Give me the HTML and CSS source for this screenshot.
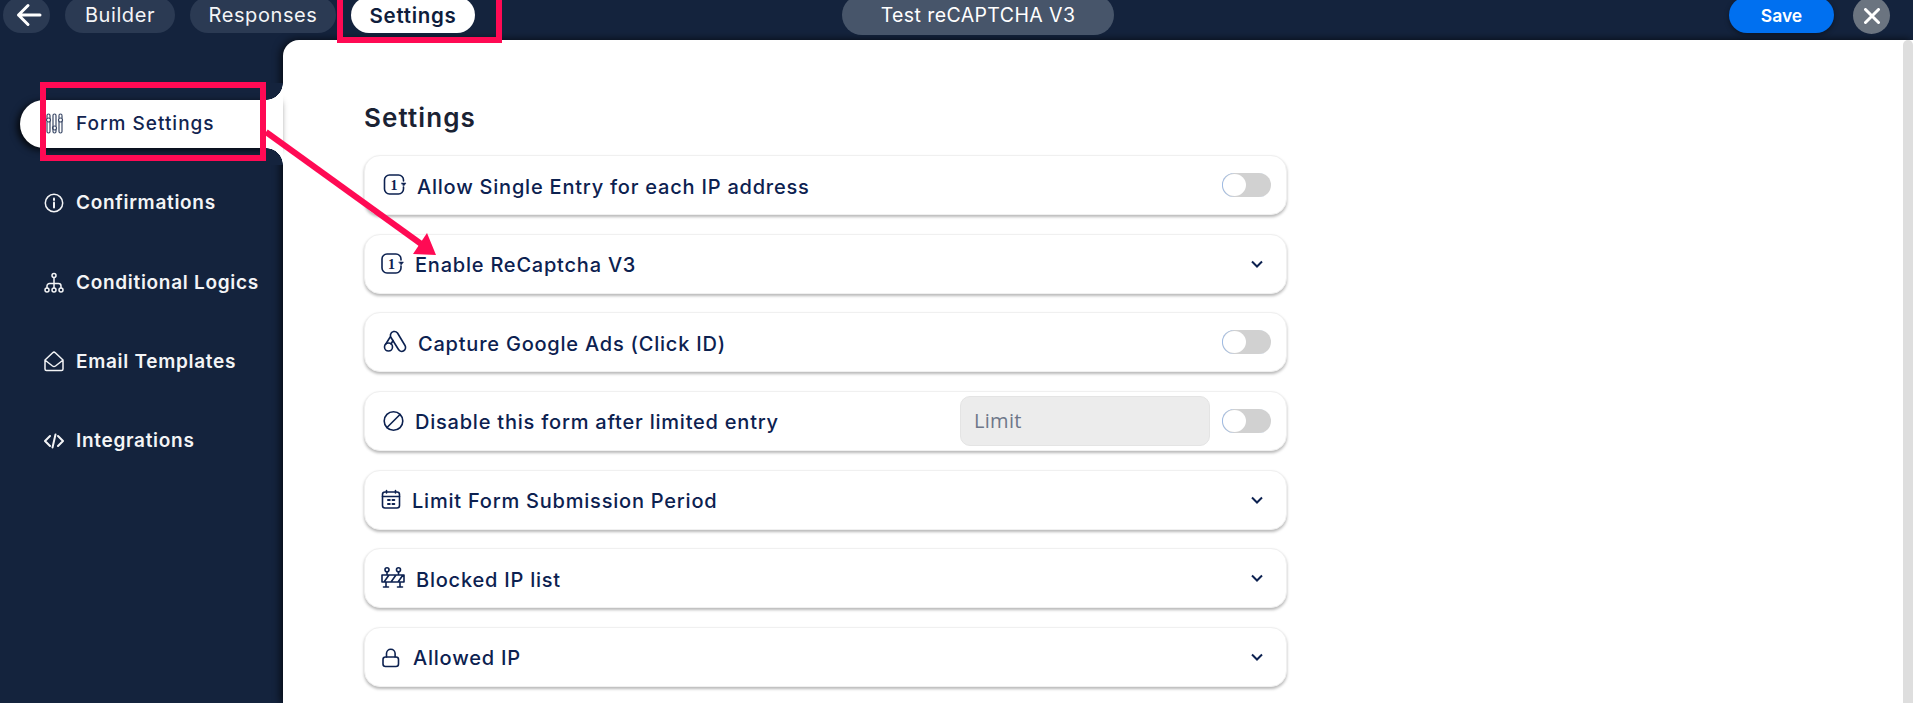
FILE: index.html
```html
<!DOCTYPE html>
<html lang="en">
<head>
  <meta charset="UTF-8">
  <meta name="viewport" content="width=device-width, initial-scale=1.0">
  <title>Test reCAPTCHA V3 - Settings</title>
  <link rel="stylesheet" href="styles.css">
</head>
<body>

  <header class="topbar">
    <div class="topbar-left">
      <button class="back">
        <svg width="26" height="24" viewBox="0 0 26 24"><path d="M24 12H2.500M12 2.500 2.500 12l9.500 9.500" class="stroke-white"/></svg>
      </button>
      <a class="tab tab-builder">Builder</a>
      <a class="tab tab-responses">Responses</a>
      <a class="tab tab-active">Settings</a>
    </div>
    <div class="form-title">Test reCAPTCHA V3</div>
    <div class="topbar-right">
      <button class="save">Save</button>
      <button class="close">
        <svg width="16" height="16" viewBox="0 0 16 16"><path d="M1.500 1.500l13 13M14.500 1.500l-13 13" class="stroke-white"/></svg>
      </button>
    </div>
  </header>

  <div class="layout">
    <nav class="sidebar">
      <a class="nav-item active">
        <svg width="20" height="22" viewBox="0 0 20 22" class="nav-ico"><path d="M3 2.500v3M3 9v9.500a1.500 1.500 0 0 0 3 0V9M6 2.500v3M9 10v8.500a1.500 1.500 0 0 0 3 0V17M12 13v-10.500M9 2.500a1.500 1.500 0 0 1 3 0M9 2.500V10M15 3v2M18 3v2M15 9v9.500a1.500 1.500 0 0 0 3 0V9M3 2.500a1.500 1.500 0 0 1 3 0M15 2.500a1.500 1.500 0 0 1 3 0"/><circle cx="4.500" cy="7" r="2"/><circle cx="10.500" cy="15" r="2"/><circle cx="16.500" cy="7" r="2"/></svg>
        <span>Form Settings</span>
      </a>
      <a class="nav-item">
        <svg width="20" height="22" viewBox="0 0 20 22" class="nav-ico"><circle cx="10" cy="11" r="8.700"/><path d="M10 10.500v5" class="thick"/><path d="M10 6.500v1.600" class="thick"/></svg>
        <span>Confirmations</span>
      </a>
      <a class="nav-item">
        <svg width="20" height="22" viewBox="0 0 20 22" class="nav-ico"><circle cx="10" cy="4.500" r="2"/><path d="M10 6.500v6M3 17v-2a2.500 2.500 0 0 1 2.500-2.500h9A2.500 2.500 0 0 1 17 15v2M10 12.500V17"/><circle cx="3" cy="19" r="2"/><circle cx="10" cy="19" r="2"/><circle cx="17" cy="19" r="2"/></svg>
        <span>Conditional Logics</span>
      </a>
      <a class="nav-item">
        <svg width="20" height="22" viewBox="0 0 20 22" class="nav-ico"><path d="M1 10l7.700-7.300a2 2 0 0 1 2.600 0L19 10v9a1.500 1.500 0 0 1-1.500 1.500h-15A1.500 1.500 0 0 1 1 19zM1.500 10.500l7 5.500a2.500 2.500 0 0 0 3 0l7-5.500"/></svg>
        <span>Email Templates</span>
      </a>
      <a class="nav-item">
        <svg width="20" height="22" viewBox="0 0 20 22" class="nav-ico"><path d="M6 6l-5 5 5 5M14 6l5 5-5 5M11.500 4.500l-3 13" class="thick"/></svg>
        <span>Integrations</span>
      </a>
    </nav>

    <main class="panel">
      <div class="content">
        <h1>Settings</h1>
        <div class="rows">

          <div class="row">
            <svg width="36" height="24" viewBox="0 0 36 24" class="row-ico"><path d="M22.500 8V7a5 5 0 0 0-5-5h-9a5 5 0 0 0-5 5v9a5 5 0 0 0 5 5h9a5 5 0 0 0 5-5v-2"/><path d="M20.500 10h4.500l-2.250 3z" class="fill"/><text x="9.500" y="16.500" class="one">1</text></svg>
            <span class="label">Allow Single Entry for each IP address</span>
            <label class="toggle"><i></i></label>
          </div>

          <div class="row">
            <svg width="34" height="24" viewBox="0 0 34 24" class="row-ico"><path d="M20 8V7a5 5 0 0 0-5-5H6a5 5 0 0 0-5 5v9a5 5 0 0 0 5 5h9a5 5 0 0 0 5-5v-2"/><path d="M18 10h4.500l-2.250 3z" class="fill"/><text x="7" y="16.500" class="one">1</text></svg>
            <span class="label">Enable ReCaptcha V3</span>
            <svg width="28" height="14" viewBox="0 0 28 14" class="chevron"><path d="M9 4.500l5 5 5-5"/></svg>
          </div>

          <div class="row">
            <svg width="37" height="24" viewBox="0 0 37 24" class="row-ico"><path d="M9.500 4.500a4 4 0 0 1 7-1.500l7.500 12.500a3.800 3.800 0 0 1-6.500 4L10 7.500M9.500 4.500c-.2 1 0 2 .5 3M9.500 6.500L4.500 14.500"/><circle cx="7.500" cy="17" r="4"/><path d="M12 10.500l-2 3.500"/></svg>
            <span class="label">Capture Google Ads (Click ID)</span>
            <label class="toggle"><i></i></label>
          </div>

          <div class="row">
            <svg width="34" height="24" viewBox="0 0 34 24" class="row-ico"><circle cx="12.500" cy="12" r="9.300"/><path d="M19 5.500L6 18.500"/></svg>
            <span class="label">Disable this form after limited entry</span>
            <input class="limit" type="text" placeholder="Limit" disabled>
            <label class="toggle"><i></i></label>
          </div>

          <div class="row">
            <svg width="31" height="24" viewBox="0 0 31 24" class="row-ico"><rect x="1.500" y="4" width="17" height="16" rx="2.500"/><path d="M1.500 8.500h17M5.500 2.500V5M14.500 2.500V5"/><path d="M7 12h1.800M11.500 12h1.800M7 16h1.800M11.500 16h1.800" class="thick"/></svg>
            <span class="label">Limit Form Submission Period</span>
            <svg width="28" height="14" viewBox="0 0 28 14" class="chevron"><path d="M9 4.500l5 5 5-5"/></svg>
          </div>

          <div class="row">
            <svg width="35" height="24" viewBox="0 0 35 24" class="row-ico"><circle cx="6" cy="3.800" r="2"/><circle cx="17.500" cy="3.800" r="2"/><path d="M1 9h22v7H1zM6 6v3M17.500 6v3M5 16v5M19 16v5M2.500 21h5M16.500 21h5M3 16l5-7M10 16l5-7M17 16l5-7"/></svg>
            <span class="label">Blocked IP list</span>
            <svg width="28" height="14" viewBox="0 0 28 14" class="chevron"><path d="M9 4.500l5 5 5-5"/></svg>
          </div>

          <div class="row">
            <svg width="32" height="24" viewBox="0 0 32 24" class="row-ico"><rect x="2" y="12" width="15.500" height="9.500" rx="2.500"/><path d="M5.500 12V8.500a4.300 4.300 0 0 1 8.600 0V12"/></svg>
            <span class="label">Allowed IP</span>
            <svg width="28" height="14" viewBox="0 0 28 14" class="chevron"><path d="M9 4.500l5 5 5-5"/></svg>
          </div>

        </div>
      </div>
      <div class="scrollbar"></div>
    </main>
  </div>

  <!-- annotations drawn over the screenshot -->
  <div class="mark mark-tab"></div>
  <div class="mark mark-nav"></div>
  <svg class="mark-arrow" width="450" height="280" viewBox="0 0 450 280">
    <path d="M266 132L424 246" class="arrow-line"/>
    <path d="M427 233L436 255 413 254z" class="arrow-head"/>
  </svg>

</body>
</html>
```

FILE: styles.css
```css
* {
  box-sizing: border-box;
}
html, body {
  height: 100%;
}
body {
  margin: 0;
  overflow: hidden;
  background-color: #14233d;
  font-family: Inter, "Noto Sans", sans-serif;
  position: relative;
}
svg {
  display: block;
  flex: none;
  fill: none;
}
button {
  border: none;
  font-family: inherit;
  cursor: pointer;
}

/* top bar */
.topbar {
  height: 40px;
  display: flex;
  align-items: flex-end;
  justify-content: space-between;
  padding: 0 23px 7px 3px;
  overflow: hidden;
  position: relative;
}
.topbar-left {
  display: flex;
  gap: 15px;
}
.topbar-right {
  display: flex;
  gap: 19px;
}
.stroke-white {
  stroke: #fff;
  stroke-width: 3;
  stroke-linecap: round;
  stroke-linejoin: round;
}
.back {
  width: 47px;
  height: 36px;
  padding: 0 0 0 5px;
  border-radius: 18px;
  background-color: #2b3a53;
  display: flex;
  align-items: center;
  justify-content: center;
}
.tab {
  height: 36px;
  border-radius: 18px;
  background-color: #2b3a53;
  color: #f4f5f7;
  font-size: 20px;
  font-weight: 400;
  letter-spacing: 0.6px;
  display: flex;
  align-items: center;
  justify-content: center;
}
.tab-builder {
  width: 110px;
}
.tab-responses {
  width: 146px;
}
.tab-active {
  width: 124px;
  background-color: #fff;
  color: #0f1d3c;
  font-size: 20.500px;
  font-weight: 600;
  letter-spacing: 0.7px;
}
.form-title {
  position: absolute;
  left: 842px;
  bottom: 5px;
  width: 272px;
  height: 40px;
  border-radius: 20px;
  background-color: #47556a;
  color: #fff;
  font-size: 19.500px;
  letter-spacing: 0.4px;
  display: flex;
  align-items: center;
  justify-content: center;
}
.save {
  width: 105px;
  height: 36px;
  border-radius: 18px;
  background-color: #0070f0;
  color: #fff;
  font-size: 17.500px;
  font-weight: 600;
  box-shadow: 0 2px 5px rgba(0, 0, 0, 0.4);
}
.close {
  width: 37px;
  height: 37px;
  margin-bottom: -1px;
  padding: 0;
  border-radius: 50%;
  background-color: #6b7480;
  display: flex;
  align-items: center;
  justify-content: center;
}

/* sidebar + panel */
.layout {
  display: flex;
  height: 663px;
}
.sidebar {
  width: 283px;
  flex: none;
  padding: 60px 0 0 20px;
  display: flex;
  flex-direction: column;
  gap: 31.300px;
}
.nav-item {
  height: 48px;
  padding: 0 0 1px 24px;
  display: flex;
  align-items: center;
  gap: 12px;
  color: #f3f4f6;
  font-size: 19px;
  font-weight: 600;
  letter-spacing: 0.7px;
  position: relative;
}
.nav-ico path, .nav-ico circle {
  stroke: #f3f4f6;
  stroke-width: 1.500;
  stroke-linecap: round;
  stroke-linejoin: round;
}
.nav-ico .thick {
  stroke-width: 2;
}
.nav-item.active {
  background-color: #fff;
  color: #12244f;
  font-weight: 500;
  letter-spacing: 1px;
  border-radius: 24px 0 0 24px;
  box-shadow: -3px 2px 7px rgba(0, 0, 0, 0.8);
  z-index: 1;
}
.active .nav-ico path, .active .nav-ico circle {
  stroke: #3c4a68;
  stroke-width: 1.200;
}
.nav-item.active::before, .nav-item.active::after {
  content: "";
  position: absolute;
  right: 0;
  width: 17px;
  height: 17px;
}
.nav-item.active::before {
  bottom: 100%;
  background: radial-gradient(circle at 0 0, #14233d 16.500px, #fff 17px);
}
.nav-item.active::after {
  top: 100%;
  background: radial-gradient(circle at 0 100%, #14233d 16.500px, #fff 17px);
}
.panel {
  flex: 1;
  display: flex;
  background-color: #fff;
  border-top-left-radius: 16px;
  box-shadow: -2px 0 9px rgba(0, 0, 0, 0.75);
}
.content {
  flex: 1;
  padding: 0 0 0 81px;
}
.scrollbar {
  width: 10px;
  flex: none;
  background-color: #dedede;
  border-radius: 6px 6px 0 0;
}

h1 {
  margin: 0;
  height: 115px;
  padding-top: 61px;
  color: #1a2233;
  font-size: 26px;
  line-height: 34px;
  font-weight: 600;
  letter-spacing: 1.1px;
}
.rows {
  width: 923px;
  display: flex;
  flex-direction: column;
  gap: 18.670px;
}
.row {
  height: 60px;
  flex: none;
  padding: 0 15px 0 16px;
  display: flex;
  align-items: center;
  background-color: #fff;
  border: 1px solid #f0f0f0;
  border-radius: 16px;
  box-shadow: 0 2px 3px rgba(0, 0, 0, 0.28);
}
.row-ico path, .row-ico rect, .row-ico circle {
  stroke: #0c2150;
  stroke-width: 1.600;
  stroke-linecap: round;
  stroke-linejoin: round;
}
.row-ico .thick {
  stroke-width: 2;
}
.row-ico .fill {
  fill: #0c2150;
  stroke-width: 0.500;
}
.one {
  fill: #0c2150;
  font-family: "Liberation Serif", serif;
  font-size: 14px;
  font-weight: 700;
}
.label {
  flex: 1;
  padding-top: 3px;
  color: #0c2150;
  font-size: 20px;
  font-weight: 500;
  letter-spacing: 0.78px;
}
.chevron path {
  stroke: #0c2150;
  stroke-width: 2;
}
.limit {
  width: 250px;
  height: 50px;
  margin-right: 12px;
  padding: 0 13px;
  background-color: #ececec;
  border: 1px solid #e4e4e4;
  border-radius: 10px;
  font-family: "Open Sans", sans-serif;
  font-size: 20px;
  letter-spacing: 0.3px;
}
.limit::placeholder {
  color: #6e7789;
  opacity: 1;
}
.toggle {
  width: 49px;
  height: 24px;
  flex: none;
  padding: 1px;
  border-radius: 12px;
  background-color: #d1d1d1;
  box-shadow: inset 1px 0 0 #9dbbe6;
  display: block;
}
.toggle i {
  display: block;
  width: 23px;
  height: 22px;
  border-radius: 50%;
  background-color: #fff;
}

/* annotations */
.mark {
  position: absolute;
  border: 6px solid #ff0a54;
  z-index: 5;
}
.mark-tab {
  left: 337px;
  top: -10px;
  width: 165px;
  height: 53px;
}
.mark-nav {
  left: 40px;
  top: 82px;
  width: 226px;
  height: 79px;
}
.mark-arrow {
  position: absolute;
  left: 0;
  top: 0;
  z-index: 5;
}
.arrow-line {
  stroke: #ff0a54;
  stroke-width: 6;
}
.arrow-head {
  fill: #ff0a54;
}
```
